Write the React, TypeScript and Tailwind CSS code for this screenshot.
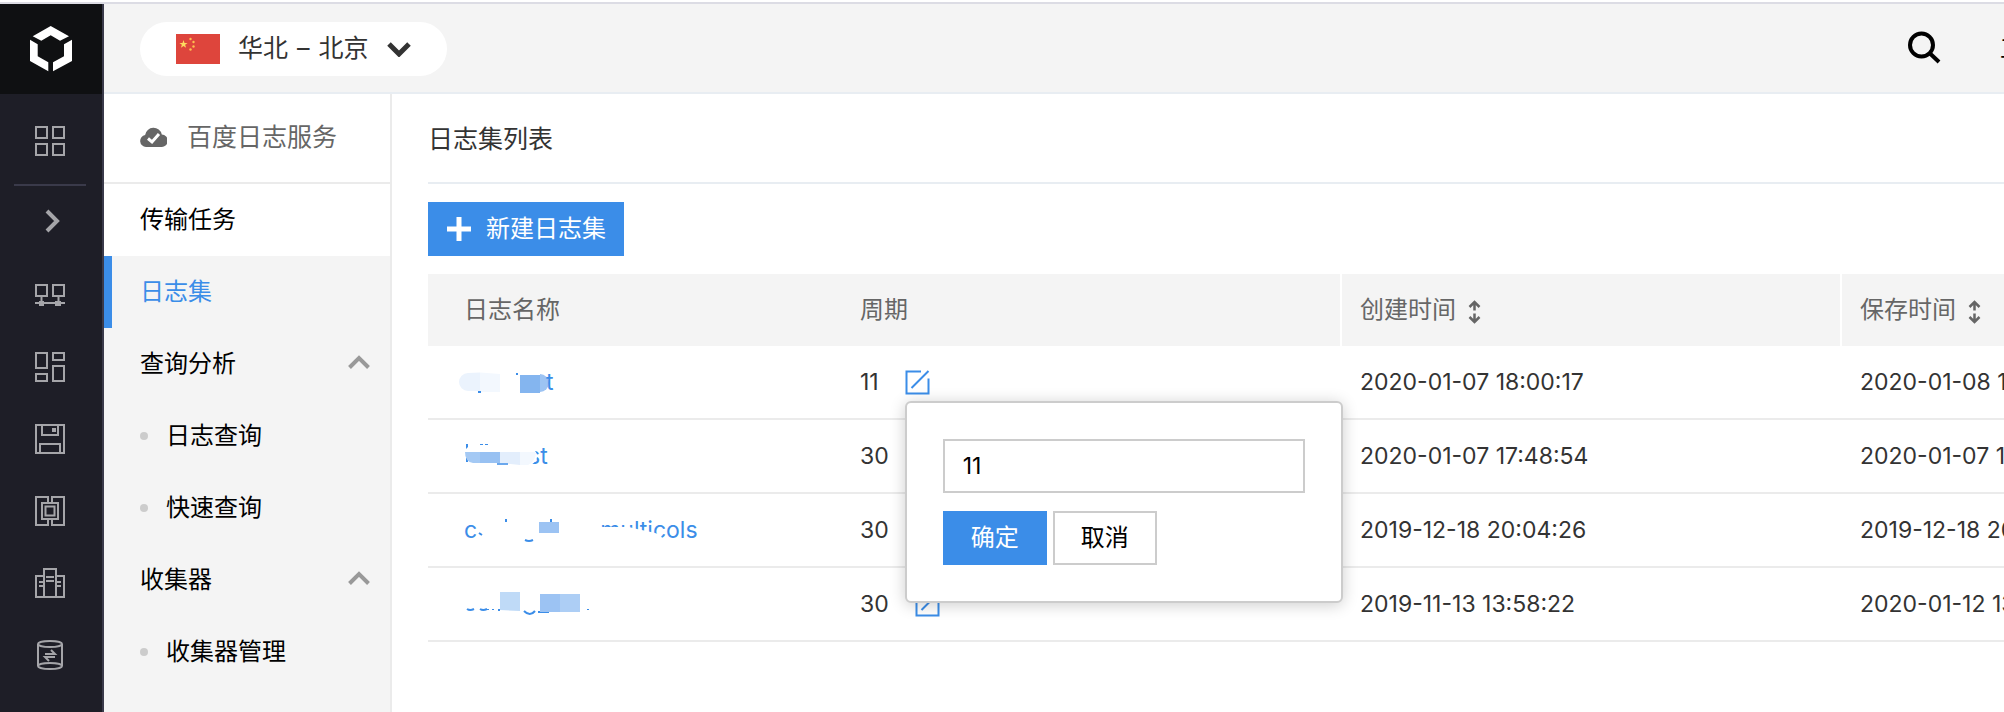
import React, { useState } from 'react';

type LogSet = {
  id: string;
  name: React.ReactNode;
  days: string;
  createdAt: string;
  savedAt: string;
};

/* Rail icons, all on a 30x30 grid */

const GridIcon = () => (
  <svg width="30" height="30" viewBox="0 0 30 30" fill="none" stroke="currentColor" strokeWidth="2">
    <path d="M1 1h11v11H1zM18 1h11v11H18zM1 18h11v11H1zM18 18h11v11H18z" />
  </svg>
);

const NetworkIcon = () => (
  <svg width="30" height="30" viewBox="0 0 30 30" fill="none" stroke="currentColor" strokeWidth="2">
    <path d="M1 5h11v11H1zM18 5h11v11H18zM6.500 16v6M23.500 16v6M0 23h30" />
    <path d="M4 21h5v5H4zM20 21h6v5h-6z" fill="currentColor" stroke="none" />
  </svg>
);

const LayoutIcon = () => (
  <svg width="30" height="30" viewBox="0 0 30 30" fill="none" stroke="currentColor" strokeWidth="2">
    <path d="M1 1h11v15H1zM18 1h11v7H18zM1 22h11v7H1zM18 14h11v15H18z" />
  </svg>
);

const DiskIcon = () => (
  <svg width="30" height="30" viewBox="0 0 30 30" fill="none" stroke="currentColor" strokeWidth="2">
    <path d="M1 1h28v28H1zM7 1v10h16V1M5 29v-9h20v9" />
    <path d="M17 4h4v4h-4z" fill="currentColor" stroke="none" />
  </svg>
);

const ChipIcon = () => (
  <svg width="30" height="30" viewBox="0 0 30 30" fill="none" stroke="currentColor" strokeWidth="2">
    <path d="M13 7V1H1v28h12v-6M17 7V1h12v28H17v-6" />
    <path d="M7 7h16v16H7z" />
    <path d="M10.500 10.500h9v9h-9z" />
  </svg>
);

const BuildingIcon = () => (
  <svg width="30" height="30" viewBox="0 0 30 30" fill="none" stroke="currentColor" strokeWidth="2">
    <path d="M9 8H1v21h28V8h-8M9 29V1h12v28M11 9h8M11 13h8M4 14h5M4 18h5M21 14h5M21 18h5" />
  </svg>
);

const DatabaseIcon = () => (
  <svg width="30" height="30" viewBox="0 0 30 30" fill="none" stroke="currentColor" strokeWidth="2">
    <ellipse cx="15" cy="4" rx="12" ry="3" />
    <ellipse cx="15" cy="26" rx="12" ry="3" />
    <path d="M3 4v22M27 4v22" />
    <path d="M10 14h10l-4-4M20 17H10l4 4" />
  </svg>
);

const Logo = () => (
  <svg width="42" height="46" viewBox="0 0 42 46" fill="#fff">
    <path d="M20.700 0 39 10.200 30 14.800 20.700 9.200 11.300 14.800 2.700 10.200z" />
    <path d="M0 13.800 7.700 18.200v12L18.300 36.200V45.300L0 35z" />
    <path d="M42 13.800 34 18.200v12L23 36.200V45.300L42 35z" />
  </svg>
);

const Flag = () => (
  <svg width="44" height="30" viewBox="0 0 44 30">
    <path d="M0 0h44v30H0z" fill="#de453c" />
    <path d="M7.500 6l1 2.900h3.100l-2.500 1.900 1 3-2.600-1.800-2.600 1.800 1-3-2.500-1.900h3.100z" fill="#fddb5f" />
    <g fill="#fdc04f">
      <circle cx="14.500" cy="5" r="1.200" />
      <circle cx="17.500" cy="8" r="1.200" />
      <circle cx="17.500" cy="12.500" r="1.200" />
      <circle cx="14.500" cy="15.500" r="1.200" />
    </g>
  </svg>
);

const CloudIcon = () => (
  <svg width="27" height="20" viewBox="0 0 27 20">
    <path d="M6 20a6 6 0 0 1-.900-11.900A8.500 8.500 0 0 1 21.800 7.400 6.300 6.300 0 0 1 21 20z" fill="#666" />
    <path d="M8 11.500l4 3.500 7-8" fill="none" stroke="#fff" strokeWidth="3" />
  </svg>
);

const SearchIcon = () => (
  <svg width="33" height="33" viewBox="0 0 33 33" fill="none" stroke="#000" strokeWidth="4">
    <circle cx="13.500" cy="14" r="11.500" />
    <path d="M21.500 22l9.500 9" />
  </svg>
);

const Caret = () => (
  <svg width="22" height="14" viewBox="0 0 22 14" fill="none" stroke="#999" strokeWidth="4" className="mb-1">
    <path d="M1.500 12.500 11 3l9.500 9.500" />
  </svg>
);

const SortIcon = () => (
  <svg width="13" height="24" viewBox="0 0 13 24" fill="none" stroke="#666" strokeWidth="2.500" className="mt-1">
    <path d="M6.500 10.500V2M1.500 7l5-5 5 5M6.500 13.500V22M1.500 17l5 5 5-5" />
  </svg>
);

const EditIcon = () => (
  <svg width="25" height="25" viewBox="0 0 25 25" fill="none" stroke="currentColor" strokeWidth="2">
    <path d="M16 1.500H1.500v22h22V8.500M6.500 18 23.500 1" />
  </svg>
);

/* Partly masked log names */

const MaskedA = () => (
  <>
    <svg width="82" height="30" viewBox="0 0 82 30" overflow="visible">
      <path d="M16 5.500V24H4A9 9 0 0 1 4 6z" fill="#ebf3fd" />
      <path d="M16 5.500 36 7v18H16z" fill="#f3f8fe" />
      <path d="M14 24h3v2h-3zM52 6h2v2h-2z" fill="#3b8de8" />
      <path d="M56 8h20v18H56z" fill="#84b5ef" />
      <path d="M76 7a9 9 0 0 1 0 18z" fill="#9cc3f3" />
    </svg>
    <span>t</span>
  </>
);

const MaskedB = () => (
  <>
    <svg width="64" height="30" viewBox="0 0 64 30" overflow="visible" className="relative z-10">
      <path d="M2 3h2v3l-2 2zM16 3h3v1h-3zM21 3h3v1h-3zM2 17h2v4H2z" fill="#3b8de8" />
      <path d="M58 6l12 2q3 4 3 8t-6 8h-9z" fill="#fff" />
      <path d="M1 11h15v11H9Q1 21 1 11" fill="#a4c9f4" />
      <path d="M16 11h20v11H16z" fill="#98c1f2" />
      <path d="M36 11h20v13l-20-2z" fill="#e3eefc" />
      <path d="M56 11h16q0 9-8 13h-8z" fill="#f3f8fe" />
      <path d="M33 22h11v2H33z" fill="#6ba8ed" />
    </svg>
    <span>st</span>
  </>
);

const MaskedC = () => (
  <>
    <span>c</span>
    <svg width="123" height="30" viewBox="0 0 123 30" overflow="visible" className="relative z-10">
      <path d="M2 18l3 2M29 4v3M74 4v4" stroke="#3b8de8" strokeWidth="2" />
      <path d="M48 25q4 2 8 0" fill="none" stroke="#3b8de8" strokeWidth="2" />
      <path d="M62 7h20v11H62z" fill="#9cc3f3" />
      <path d="M122 12h30l8 2 14 3q11 2 11 6v5h-63z" fill="#fff" />
    </svg>
    <span>multicols</span>
  </>
);

const MaskedD = () => (
  <svg width="126" height="30" viewBox="0 0 126 30">
    <path d="M3 20q3 2 7 0M16 20q3 2 7 0M24 20v1M29 20v1M34 21h2M60 22q6 6 11 0M74 23h11M124 20v1" fill="none" stroke="#3b8de8" strokeWidth="2" />
    <path d="M36 3h20v19l-20-1z" fill="#bfdaf7" />
    <path d="M76 5h20v18H76z" fill="#9cc3f3" />
    <path d="M96 5h20v18H96z" fill="#adcef5" />
  </svg>
);

const logSets: LogSet[] = [
  { id: 'a', name: <MaskedA />, days: '11', createdAt: '2020-01-07 18:00:17', savedAt: '2020-01-08 18:00:17' },
  { id: 'b', name: <MaskedB />, days: '30', createdAt: '2020-01-07 17:48:54', savedAt: '2020-01-07 17:48:54' },
  { id: 'c', name: <MaskedC />, days: '30', createdAt: '2019-12-18 20:04:26', savedAt: '2019-12-18 20:04:26' },
  { id: 'd', name: <MaskedD />, days: '30', createdAt: '2019-11-13 13:58:22', savedAt: '2020-01-12 13:58:22' },
];

const railItems = [
  { label: '网络', icon: NetworkIcon },
  { label: '概览', icon: LayoutIcon },
  { label: '存储', icon: DiskIcon },
  { label: '计算', icon: ChipIcon },
  { label: '企业', icon: BuildingIcon },
  { label: '数据库', icon: DatabaseIcon },
];

const menuGroups = [
  { title: '查询分析', children: ['日志查询', '快速查询'] },
  { title: '收集器', children: ['收集器管理'] },
];

function Rail() {
  return (
    <nav className="flex w-[104px] shrink-0 flex-col border-r-2 border-[#3a3a4a] bg-[#1e1e27] text-[#a5a5a9]">
      <a href="#" aria-label="首页" className="flex h-[90px] items-center justify-center bg-[#0f1012]">
        <Logo />
      </a>
      <a href="#" aria-label="全部产品" className="flex h-[90px] items-center pt-1 pl-[35px]">
        <GridIcon />
      </a>
      <div className="mr-4 ml-3.5 h-0.5 bg-[#3a3a4a]" />
      <button aria-label="展开" className="flex h-[72px] items-center pb-0.5 pl-[45px]">
        <svg width="15" height="24" viewBox="0 0 15 24" fill="none" stroke="currentColor" strokeWidth="4">
          <path d="M2 2l10 10L2 22" />
        </svg>
      </button>
      {railItems.map(({ label, icon: Icon }) => (
        <a key={label} href="#" aria-label={label} className="flex h-[72px] items-center pt-0.5 pl-[35px]">
          <Icon />
        </a>
      ))}
    </nav>
  );
}

function SideMenu() {
  return (
    <aside className="w-[288px] shrink-0 border-r-2 border-[#ebebeb] bg-[#f4f4f4] text-[24px] leading-[72px] text-black">
      <div className="flex h-[90px] items-center gap-5 border-b-2 border-[#ebebeb] bg-white pb-0.5 pl-9 text-[25px] text-[#666]">
        <CloudIcon />
        <span>百度日志服务</span>
      </div>
      <a href="#" className="block bg-white pl-9">传输任务</a>
      <a href="#" className="block border-l-8 border-[#3b8de8] pl-7 text-[#3b8de8]">日志集</a>
      {menuGroups.map((group) => (
        <div key={group.title}>
          <button className="flex w-full items-center justify-between pr-5 pl-9">
            <span>{group.title}</span>
            <Caret />
          </button>
          {group.children.map((item) => (
            <a key={item} href="#" className="flex items-center gap-[18px] pl-9">
              <span className="size-2 rounded-full bg-[#ccc]" />
              {item}
            </a>
          ))}
        </div>
      ))}
    </aside>
  );
}

function EditPopover({ value, onClose }: { value: string; onClose: () => void }) {
  const [days, setDays] = useState(value);

  return (
    <div className="absolute top-full left-0 z-20 mt-1.5 w-[438px] rounded-md border-2 border-[#ccc] bg-white p-9 shadow-[0_2px_16px_rgba(0,0,0,0.2)]">
      <input
        aria-label="周期"
        value={days}
        onChange={(e) => setDays(e.target.value)}
        className="block h-[54px] w-full border-2 border-[#ccc] px-[18px] text-[23px] text-black outline-none"
      />
      <div className="mt-[18px] flex gap-1.5 text-[24px]">
        <button onClick={onClose} className="h-[54px] w-[104px] bg-[#3b8de8] text-white">确定</button>
        <button onClick={onClose} className="h-[54px] w-[104px] border-2 border-[#ccc] bg-white text-black">取消</button>
      </div>
    </div>
  );
}

function LogTable() {
  const [editing, setEditing] = useState<string | null>('a');

  return (
    <table className="mt-[18px] w-full min-w-[1914px] table-fixed border-separate border-spacing-0 text-left text-[23px] whitespace-nowrap text-[#333]">
      <thead>
        <tr className="h-[72px] bg-[#f4f4f4] text-[24px] text-[#666]">
          <th className="w-[414px] pl-9 font-normal">日志名称</th>
          <th className="w-[500px] border-r-2 border-white pl-[18px] font-normal">周期</th>
          <th className="w-[500px] border-r-2 border-white pl-[18px] font-normal">
            <span className="flex items-center gap-3">创建时间<SortIcon /></span>
          </th>
          <th className="w-[500px] pl-[18px] font-normal">
            <span className="flex items-center gap-3">保存时间<SortIcon /></span>
          </th>
        </tr>
      </thead>
      <tbody>
        {logSets.map((row) => (
          <tr key={row.id} className="h-[74px]">
            <td className="border-b-2 border-[#ebebeb] pl-9">
              <a href="#" className="flex items-center text-[#3b8de8]">{row.name}</a>
            </td>
            <td className="border-b-2 border-[#ebebeb] pl-[18px]">
              <div className="flex items-center gap-[26px]">
                <span>{row.days}</span>
                <div className="relative flex">
                  <button aria-label="编辑" className="text-[#3b8de8]" onClick={() => setEditing(row.id)}>
                    <EditIcon />
                  </button>
                  {editing === row.id && <EditPopover value={row.days} onClose={() => setEditing(null)} />}
                </div>
              </div>
            </td>
            <td className="border-b-2 border-[#ebebeb] pl-[18px]">{row.createdAt}</td>
            <td className="border-b-2 border-[#ebebeb] pl-[18px]">{row.savedAt}</td>
          </tr>
        ))}
      </tbody>
    </table>
  );
}

export default function App() {
  return (
    <div className="flex min-h-screen flex-col overflow-hidden bg-white pt-0.5 font-['Inter','Noto_Sans_CJK_SC',sans-serif]">
      <div className="h-0.5 bg-[#dcdce4]" />
      <div className="flex flex-1">
        <Rail />
        <div className="flex min-w-0 flex-1 flex-col">
          {/* Top bar */}
          <header className="flex h-[90px] shrink-0 items-center justify-between border-b-2 border-[#e8edf2] bg-[#f4f4f4] pt-0.5 pl-9">
            <button className="flex h-[54px] items-center gap-[18px] rounded-full bg-white px-9 text-[25px] text-[#333]">
              <Flag />
              <span className="flex gap-[9px]">
                <span>华北</span>
                <span>–</span>
                <span>北京</span>
              </span>
              <svg width="24" height="15" viewBox="0 0 24 15" fill="none" stroke="currentColor" strokeWidth="5">
                <path d="M2 2l10 10L22 2" />
              </svg>
            </button>
            <div className="flex items-center gap-[59px]">
              <button aria-label="搜索" className="pb-1">
                <SearchIcon />
              </button>
              <a href="#" className="w-1 overflow-hidden text-[24px] whitespace-nowrap text-black">工单</a>
            </div>
          </header>

          <div className="flex flex-1">
            <SideMenu />
            <main className="min-w-0 flex-1 overflow-hidden pl-9">
              <h1 className="flex h-[90px] items-center border-b-2 border-[#e8edf2] pt-1 text-[25px] text-[#333]">日志集列表</h1>
              <button className="mt-[18px] flex h-[54px] items-center gap-3.5 bg-[#3b8de8] px-[18px] text-[24px] text-white">
                <svg width="26" height="24" viewBox="0 0 26 24" fill="none" stroke="currentColor" strokeWidth="5">
                  <path d="M1 12h24M13 0v24" />
                </svg>
                新建日志集
              </button>
              <LogTable />
            </main>
          </div>
        </div>
      </div>
    </div>
  );
}
